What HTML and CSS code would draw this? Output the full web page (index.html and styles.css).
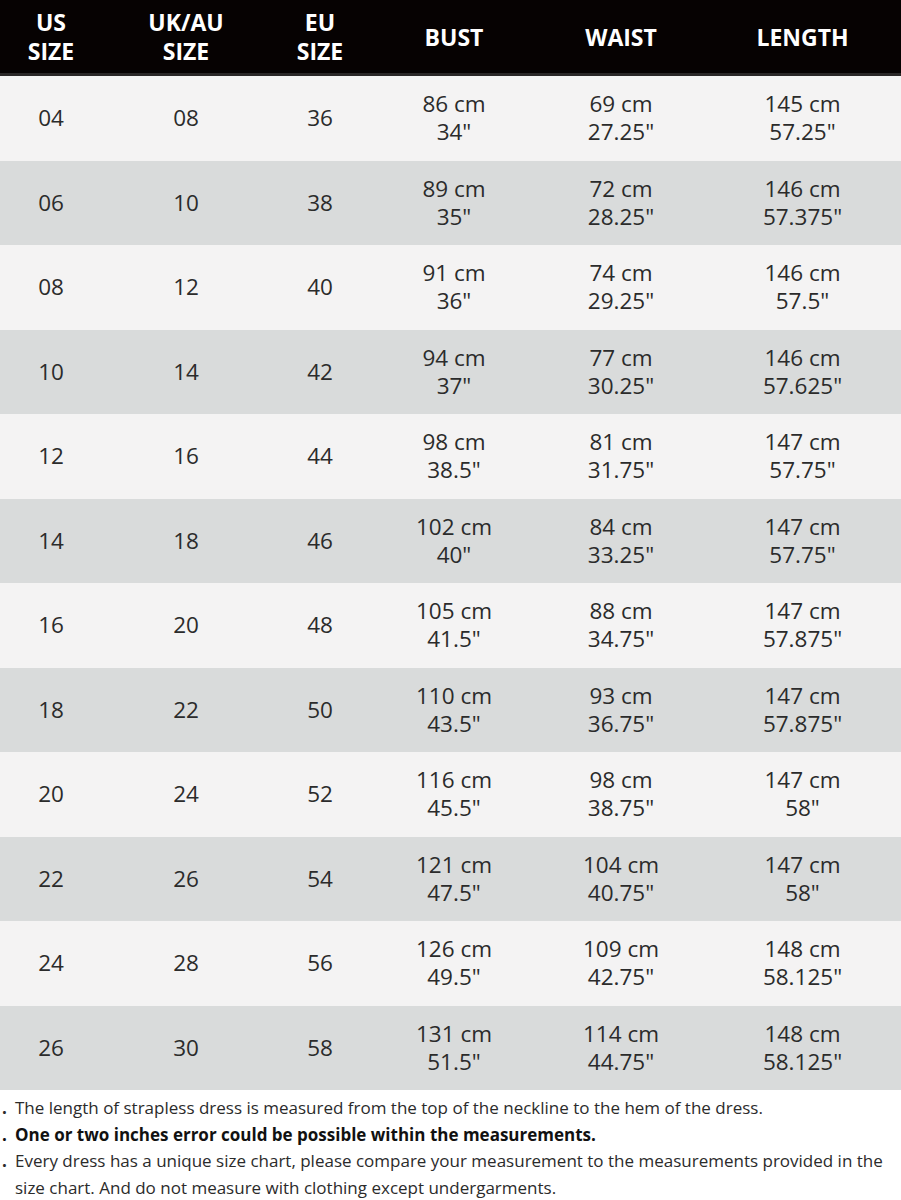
FILE: index.html
```
<!DOCTYPE html>
<html>
<head>
<meta charset="utf-8">
<link rel="stylesheet" href="styles.css">
</head>
<body>
<div class="chart">
  <div class="row head">
    <div class="cell">US<br>SIZE</div>
    <div class="cell">UK/AU<br>SIZE</div>
    <div class="cell">EU<br>SIZE</div>
    <div class="cell">BUST</div>
    <div class="cell">WAIST</div>
    <div class="cell">LENGTH</div>
  </div>
  <div class="row light"><div class="cell">04</div><div class="cell">08</div><div class="cell">36</div><div class="cell">86 cm<br>34"</div><div class="cell">69 cm<br>27.25"</div><div class="cell">145 cm<br>57.25"</div></div>
  <div class="row dark"><div class="cell">06</div><div class="cell">10</div><div class="cell">38</div><div class="cell">89 cm<br>35"</div><div class="cell">72 cm<br>28.25"</div><div class="cell">146 cm<br>57.375"</div></div>
  <div class="row light"><div class="cell">08</div><div class="cell">12</div><div class="cell">40</div><div class="cell">91 cm<br>36"</div><div class="cell">74 cm<br>29.25"</div><div class="cell">146 cm<br>57.5"</div></div>
  <div class="row dark"><div class="cell">10</div><div class="cell">14</div><div class="cell">42</div><div class="cell">94 cm<br>37"</div><div class="cell">77 cm<br>30.25"</div><div class="cell">146 cm<br>57.625"</div></div>
  <div class="row light"><div class="cell">12</div><div class="cell">16</div><div class="cell">44</div><div class="cell">98 cm<br>38.5"</div><div class="cell">81 cm<br>31.75"</div><div class="cell">147 cm<br>57.75"</div></div>
  <div class="row dark"><div class="cell">14</div><div class="cell">18</div><div class="cell">46</div><div class="cell">102 cm<br>40"</div><div class="cell">84 cm<br>33.25"</div><div class="cell">147 cm<br>57.75"</div></div>
  <div class="row light"><div class="cell">16</div><div class="cell">20</div><div class="cell">48</div><div class="cell">105 cm<br>41.5"</div><div class="cell">88 cm<br>34.75"</div><div class="cell">147 cm<br>57.875"</div></div>
  <div class="row dark"><div class="cell">18</div><div class="cell">22</div><div class="cell">50</div><div class="cell">110 cm<br>43.5"</div><div class="cell">93 cm<br>36.75"</div><div class="cell">147 cm<br>57.875"</div></div>
  <div class="row light"><div class="cell">20</div><div class="cell">24</div><div class="cell">52</div><div class="cell">116 cm<br>45.5"</div><div class="cell">98 cm<br>38.75"</div><div class="cell">147 cm<br>58"</div></div>
  <div class="row dark"><div class="cell">22</div><div class="cell">26</div><div class="cell">54</div><div class="cell">121 cm<br>47.5"</div><div class="cell">104 cm<br>40.75"</div><div class="cell">147 cm<br>58"</div></div>
  <div class="row light"><div class="cell">24</div><div class="cell">28</div><div class="cell">56</div><div class="cell">126 cm<br>49.5"</div><div class="cell">109 cm<br>42.75"</div><div class="cell">148 cm<br>58.125"</div></div>
  <div class="row dark"><div class="cell">26</div><div class="cell">30</div><div class="cell">58</div><div class="cell">131 cm<br>51.5"</div><div class="cell">114 cm<br>44.75"</div><div class="cell">148 cm<br>58.125"</div></div>
</div>
<ul class="notes">
  <li><span class="dot">.</span><span>The length of strapless dress is measured from the top of the neckline to the hem of the dress.</span></li>
  <li class="bold"><span class="dot">.</span><span>One or two inches error could be possible within the measurements.</span></li>
  <li><span class="dot">.</span><span>Every dress has a unique size chart, please compare your measurement to the measurements provided in the size chart. And do not measure with clothing except undergarments.</span></li>
</ul>
</body>
</html>
```

FILE: styles.css
```
html, body {
  margin: 0;
  padding: 0;
  background: #ffffff;
}
body {
  width: 901px;
  font-family: "Open Sans", "Noto Sans", sans-serif;
  color: #2b2b2b;
}
.chart {
  display: flex;
  flex-direction: column;
}
.row {
  display: grid;
  grid-template-columns: 102px 168px 100px 168px 166px 197px;
  align-items: center;
  height: 84.5px;
}
.cell {
  text-align: center;
  font-size: 22.5px;
  line-height: 28px;
}
.head {
  height: 76px;
  box-sizing: border-box;
  background: #060202;
  border-bottom: 3px solid #2a2727;
  color: #ffffff;
}
.head .cell {
  font-weight: 700;
  font-size: 23px;
  line-height: 29px;
  padding-top: 1px;
}
.light {
  background: #f4f3f3;
}
.dark {
  background: #d9dbdb;
}
.notes {
  list-style: none;
  margin: 0;
  padding: 5px 0 0 0;
}
.notes li {
  display: flex;
  font-size: 17px;
  line-height: 26.5px;
  color: #2b2b2b;
}
.notes .dot {
  flex: 0 0 15px;
  font-weight: 700;
  padding-left: 2px;
  box-sizing: border-box;
}
.notes .bold {
  font-weight: 700;
  color: #111111;
}
```
